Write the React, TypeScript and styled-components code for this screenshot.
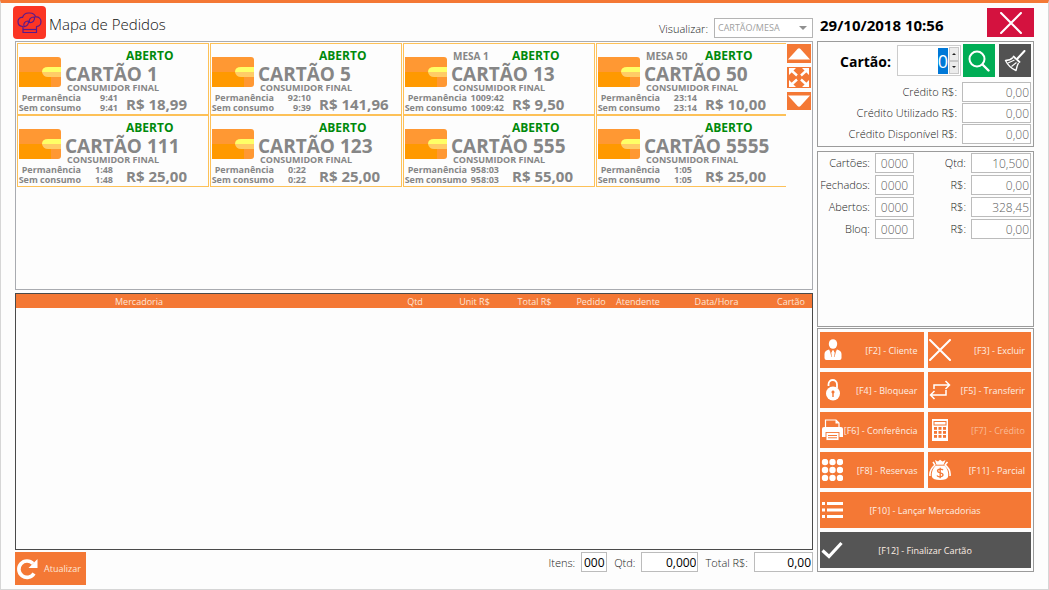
import React, { useEffect, useRef } from "react";
import styled, { createGlobalStyle } from "styled-components";

const ORANGE = "#f47835";
const AMBER = "#fdc158";

const GlobalStyle = createGlobalStyle`
  * { box-sizing: border-box; }
  body { margin: 0; background: #fdfdfd; font-family: "Open Sans", "Noto Sans", sans-serif; }
  button, input, select { font-family: inherit; margin: 0; }
  svg { display: block; }
`;

const Window = styled.div`
  display: flex;
  flex-direction: column;
  min-height: 100vh;
  padding: 0 14px;
  border: 1px solid #d6d6d6;
  border-top: 3px solid ${ORANGE};
`;

const Split = styled.div`
  display: grid;
  grid-template-columns: minmax(0, 1fr) 217px;
  column-gap: 4px;
`;

const Header = styled(Split).attrs({ as: "header" })`
  height: 38px;
`;

const Content = styled(Split).attrs({ as: "main" })`
  flex: 1;
`;

const TitleBar = styled.div`
  display: flex;
  align-items: center;
  margin-left: -2px;
`;

const Title = styled.h1`
  flex: 1;
  margin: 0 0 0 3px;
  padding-top: 4px;
  font-size: 15px;
  font-weight: 300;
  line-height: 24px;
  color: #111;
`;

const ViewLabel = styled.label`
  padding: 13px 6px 0 0;
  font-size: 11px;
  font-weight: 300;
  line-height: 16px;
  color: #222;
`;

const SelectBox = styled.div`
  position: relative;
  width: 99px;
  margin-top: 11px;
  svg { position: absolute; right: 6px; top: 8px; }
`;

const ViewSelect = styled.select`
  display: block;
  width: 100%;
  height: 20px;
  padding: 0 3px;
  border: 1px solid #b4b4b4;
  border-radius: 0;
  background: #fff;
  appearance: none;
  font-size: 9px;
  color: #a0a0a0;
  opacity: 1;
`;

const ClockBar = styled.div`
  display: flex;
  justify-content: space-between;
  align-items: flex-start;
  padding: 5px 0 0 3px;
`;

const Clock = styled.time`
  padding-top: 5px;
  font-size: 15px;
  font-weight: 700;
  line-height: 24px;
  color: #000;
`;

const IconButton = styled.button<{ $bg: string; $w: number; $h: number }>`
  display: flex;
  align-items: center;
  justify-content: center;
  flex: none;
  width: ${(p) => p.$w}px;
  height: ${(p) => p.$h}px;
  padding: 0;
  border: 0;
  background: ${(p) => p.$bg};
`;

const Column = styled.div`
  display: flex;
  flex-direction: column;
  min-width: 0;
`;

const SideColumn = styled(Column)`
  padding-bottom: 17px;
`;

const CardsPanel = styled.section`
  display: grid;
  grid-template-columns: minmax(0, 1fr) 24px;
  column-gap: 1px;
  min-height: 249px;
  padding: 1px;
  border: 1px solid #a9abb0;
`;

const CardGrid = styled.div`
  display: grid;
  grid-template-columns: repeat(4, 192px);
  grid-auto-rows: 72px;
  column-gap: 1px;
  align-content: start;
  overflow: hidden;
`;

const Scroller = styled.div`
  display: flex;
  flex-direction: column;
  gap: 4px;
  padding-top: 1px;
`;

const CardBox = styled.article`
  border: 1px solid ${AMBER};
  font-weight: 700;
  color: #868686;
`;

const CardTop = styled.div`
  display: grid;
  grid-template-columns: 42px 1fr;
  column-gap: 4px;
  height: 49px;
  padding-left: 1px;
  svg { margin-top: 13px; }
`;

const StatusRow = styled.div`
  display: grid;
  grid-template-columns: 61px 1fr;
  padding-top: 4px;
  line-height: 16px;
`;

const Mesa = styled.span`
  padding-left: 2px;
  font-size: 10px;
`;

const Status = styled.span`
  font-size: 12px;
  color: #008a0c;
`;

const CardName = styled.h2`
  margin: 0;
  font-size: 19px;
  line-height: 20px;
  white-space: nowrap;
`;

const Client = styled.p`
  margin: 0;
  padding-left: 2px;
  font-size: 9px;
  line-height: 8px;
`;

const CardBottom = styled.div`
  display: grid;
  grid-template-columns: 63px 37px 1fr;
  font-size: 9px;
  line-height: 10px;
  white-space: nowrap;
`;

const Times = styled.div<{ $inset?: number }>`
  display: flex;
  flex-direction: column;
  align-items: flex-end;
  padding-right: ${(p) => p.$inset || 0}px;
`;

const Price = styled.strong`
  padding-left: 8px;
  font-size: 15px;
  font-weight: 700;
  line-height: 23px;
`;

const TablePanel = styled.section`
  flex: 1;
  margin-top: 3px;
  min-height: 120px;
  border: 1px solid #4a4a4a;
`;

const ItemsTable = styled.table`
  width: 100%;
  border-collapse: collapse;
  table-layout: fixed;
`;

const Th = styled.th<{ $w?: number; $first?: boolean }>`
  width: ${(p) => (p.$w ? `${p.$w}px` : "auto")};
  height: 14px;
  padding: 1px 0 0 ${(p) => (p.$first ? 99 : 0)}px;
  background: ${ORANGE};
  color: #fde6d8;
  font-size: 9px;
  font-weight: 400;
  line-height: 13px;
  text-align: ${(p) => (p.$first ? "left" : "center")};
  white-space: nowrap;
`;

const Footer = styled.footer`
  display: flex;
  align-items: flex-start;
  padding: 2px 0 4px;
`;

const RefreshButton = styled.button`
  display: flex;
  align-items: center;
  width: 71px;
  height: 33px;
  margin-right: auto;
  padding: 0 0 0 1px;
  gap: 6px;
  border: 0;
  background: ${ORANGE};
  color: #fde6d8;
  font-size: 9px;
`;

const FooterLabel = styled.label`
  padding: 0 6px 0 7px;
  font-size: 11px;
  font-weight: 300;
  line-height: 21px;
  color: #222;
`;

const Field = styled.input<{ $w: number; $dark?: boolean }>`
  width: ${(p) => p.$w}px;
  height: 20px;
  padding: 0 1px;
  border: 1px solid #bcbcbc;
  border-radius: 0;
  background: #fff;
  color: ${(p) => (p.$dark ? "#000" : "#606060")};
  font-size: 12px;
  font-weight: ${(p) => (p.$dark ? 400 : 300)};
  text-align: right;
  outline: none;
`;

const CountField = styled(Field)`
  text-align: center;
`;

const SidePanel = styled.section<{ $grow?: boolean; $gap: number }>`
  flex: ${(p) => (p.$grow ? "1 0 auto" : "none")};
  margin-bottom: ${(p) => p.$gap}px;
  padding: ${(p) => (p.$grow ? 1 : 2)}px 2px 2px;
  border: 1px solid #9b9b9b;
`;

const SearchRow = styled.div`
  display: flex;
  justify-content: flex-end;
  align-items: center;
  height: 33px;
  margin-bottom: 5px;
`;

const CardLabel = styled.label`
  padding: 2px 6px 0 0;
  font-size: 14px;
  font-weight: 700;
  color: #000;
`;

const Spinner = styled.div`
  display: flex;
  width: 64px;
  height: 31px;
  margin-right: 2px;
  padding: 1px;
  border: 1px solid #ccc;
  background: #fff;
`;

const SearchButtons = styled.div`
  display: flex;
  gap: 4px;
`;

const SpinnerInput = styled.input`
  flex: 1;
  min-width: 0;
  padding: 0;
  border: 0;
  outline: none;
  background: transparent;
  font-size: 18px;
  font-weight: 400;
  line-height: 26px;
  text-align: right;
  &::selection { background: #0078d7; color: #fff; }
`;

const Arrows = styled.div`
  display: grid;
  grid-template-rows: 1fr 1fr;
  width: 10px;
  margin-left: 1px;
`;

const ArrowButton = styled.button`
  display: flex;
  align-items: center;
  justify-content: center;
  padding: 0;
  border: 1px solid #c8c8c8;
  background: #ececec;
`;

const CreditGrid = styled.div`
  display: grid;
  grid-template-columns: 1fr auto;
  row-gap: 1px;
  column-gap: 5px;
`;

const TotalsGrid = styled.div`
  display: grid;
  grid-template-columns: 50px 39px 1fr auto;
  column-gap: 5px;
  row-gap: 2px;
`;

const FieldLabel = styled.label`
  font-size: 11px;
  font-weight: 300;
  line-height: 20px;
  text-align: right;
  white-space: nowrap;
  color: #222;
`;

const Actions = styled.div`
  display: grid;
  grid-template-columns: 1fr 1fr;
  gap: 4px;
  padding: 1px 0;
`;

const ActionButton = styled.button<{ $wide?: boolean; $dark?: boolean }>`
  display: grid;
  grid-template-columns: 22px 1fr;
  align-items: center;
  grid-column: ${(p) => (p.$wide ? "1 / -1" : "auto")};
  height: 36px;
  padding: 0 ${(p) => (p.$wide ? 24 : 6)}px 0 1px;
  border: 0;
  background: ${(p) => (p.$dark ? "#555" : ORANGE)};
  color: #fdeee4;
  font-size: 9px;
  text-align: ${(p) => (p.$wide ? "center" : "right")};
  white-space: nowrap;
  &:disabled { color: #f9bb97; }
`;

const Logo = () => (
  <svg width="33" height="33" viewBox="0 0 33 33">
    <rect width="33" height="33" rx="4" fill="#fb3524" />
    <g fill="none" stroke="#5a1a8c" strokeWidth="1.2" strokeLinejoin="round">
      <path d="M10 26.500V20.500C6.500 20.500 5 18 5 15.500C5 13 7 11 9.500 11.500C10.500 8.500 13 6.800 16 7C19.500 6.800 22 8.500 22.500 11C26 10.500 28 13 28 15.500C28 18.500 26 20.500 23.500 20.500V26.500Z" />
      <path d="M10 23.500H23.500" />
      <path d="M11 20.500C10 17.500 12 14.800 15.500 15C16 18 14 20.800 11 20.500ZM16.500 16.500C15.500 13.500 17.500 10.800 21.500 11C22 14 20 17 16.500 16.500Z" />
    </g>
  </svg>
);

const Wallet = () => (
  <svg width="42" height="30" viewBox="0 0 42 30">
    <path d="M0 0H39Q42 0 42 3V27Q42 30 39 30H0Z" fill="#ff9833" />
    <path d="M0 15H32V30H0Z" fill="#ff9900" />
    <path d="M42 10H29Q23 10 23 15H42Z" fill="#ffff66" />
    <path d="M23 15H42V20H29Q24 20 23 15Z" fill="#ffcc66" />
  </svg>
);

const Cross = ({ size }: { size: number }) => (
  <svg width={size} height={size} viewBox="0 0 21 21">
    <path d="M1 1L20 20M20 1L1 20" stroke="#fff" strokeWidth="2" strokeLinecap="round" />
  </svg>
);

const SearchIcon = () => (
  <svg width="22" height="22" viewBox="0 0 22 22" fill="none" stroke="#fff">
    <circle cx="9" cy="9" r="7.500" strokeWidth="2" />
    <path d="M14.500 14.500L20.500 20.500" strokeWidth="2.400" strokeLinecap="round" />
  </svg>
);

const Broom = () => (
  <svg width="22" height="22" viewBox="0 0 22 22" fill="none" stroke="#fff">
    <path d="M20.500 1L13.500 8.500" strokeWidth="2" strokeLinecap="round" />
    <path d="M9.500 6.500L15.500 12" strokeWidth="1.800" strokeLinecap="round" />
    <path d="M9 7.500C7 9.500 4 10.500 1.500 10.500C3.500 14.500 7 18.500 12 20.500C12.500 18 13 15.500 14.500 13" strokeWidth="1.400" strokeLinejoin="round" />
    <path d="M4 13L10.500 10M7.500 16.500L12.500 12.500" strokeWidth="1.100" />
  </svg>
);

const Triangle = ({ down }: { down?: boolean }) => (
  <svg width="22" height="12" viewBox="0 0 22 12">
    <path d={down ? "M0 0.500H22L12.500 11Q11 12.500 9.500 11Z" : "M0 11.500H22L12.500 1Q11 -0.500 9.500 1Z"} fill="#fff" />
  </svg>
);

const Expand = () => (
  <svg width="22" height="21" viewBox="0 0 22 21">
    <path
      d="M1 1H8L1 8ZM21 1H14L21 8ZM1 20H8L1 13ZM21 20H14L21 13Z"
      fill="#fff"
    />
    <path
      d="M3 3L9 8.500M19 3L13 8.500M3 18L9 12.500M19 18L13 12.500"
      stroke="#fff"
      strokeWidth="2.400"
    />
  </svg>
);

const Caret = ({ w, down }: { w: number; down?: boolean }) => (
  <svg width={w} height={w / 2} viewBox="0 0 8 4">
    <path d={down ? "M0 0H8L4 4Z" : "M0 4H8L4 0Z"} fill={w > 5 ? "#909090" : "#222"} />
  </svg>
);

const Refresh = () => (
  <svg width="22" height="22" viewBox="0 0 22 22">
    <path d="M17 5.500A8.200 8.200 0 1 0 18 15.500" fill="none" stroke="#fff" strokeWidth="3.600" />
    <path d="M21.500 1V10H12.500Z" fill="#fff" />
  </svg>
);

const icons = {
  client: (
    <g fill="#fff">
      <ellipse cx="12" cy="5" rx="4.200" ry="4.800" />
      <path d="M8 10.500L12 15L16 10.500Q20.500 11.500 20.500 15V19Q20.500 21 18.500 21H5.500Q3.500 21 3.500 19V15Q3.500 11.500 8 10.500Z" />
      <path d="M9 11L11 18M15 11L13 18" stroke={ORANGE} strokeWidth="0.900" />
      <path d="M11 11.500H13L13.300 17L12 19L10.700 17Z" />
    </g>
  ),
  cross: <path d="M1 1L21 21M21 1L1 21" stroke="#fff" strokeWidth="2" strokeLinecap="round" />,
  lock: (
    <g>
      <path d="M7.500 7V5.500C7.500 -0.500 16 -0.500 16 5.500V9" fill="none" stroke="#fff" strokeWidth="1.800" />
      <circle cx="12" cy="14.500" r="7" fill="#fff" />
      <path d="M12 11.500A1.600 1.600 0 0 1 12.700 14.500V18H11.300V14.500A1.600 1.600 0 0 1 12 11.500Z" fill={ORANGE} />
    </g>
  ),
  swap: (
    <g fill="none" stroke="#fff" strokeWidth="1.500">
      <path d="M5 10V6H20.500M16.500 2L20.500 6L16.500 10M17 11V16H1.500M5.500 12L1.500 16L5.500 20" />
    </g>
  ),
  printer: (
    <g fill="#fff">
      <path d="M4.500 1H15L18 4V10H4.500Z" fill="none" stroke="#fff" strokeWidth="1.200" />
      <path d="M14.500 1V4.500H18Z" />
      <path d="M3 8H20Q22 8 22 10V18H1V10Q1 8 3 8Z" />
      <rect x="5" y="13.500" width="13" height="8" stroke={ORANGE} strokeWidth="0.900" />
      <path d="M7 16.500H16M7 18.800H16" stroke={ORANGE} strokeWidth="1" />
    </g>
  ),
  calc: (
    <g>
      <path d="M3 0H19V22H3Z" fill="#fff" />
      <rect x="5" y="2.500" width="12" height="3.500" fill="none" stroke={ORANGE} strokeWidth="1" />
      <g fill={ORANGE}>
        {[8, 12, 16].map((y) => [5, 9.5, 14].map((x) => <rect key={`${x}-${y}`} x={x} y={y} width="3" height="2.800" />))}
      </g>
    </g>
  ),
  grid: (
    <g fill="#fff">
      {[3, 11, 19].map((y) => [4, 11.5, 19].map((x) => <circle key={`${x}-${y}`} cx={x} cy={y} r="3.200" />))}
    </g>
  ),
  money: (
    <g>
      <path d="M6 1L9 2.500L11 0.800L13.500 2.500L16.500 1L14.500 6C18 8.500 20 13 19 18Q18 21 11 21Q4 21 3 18C2 13 4.500 8.500 7.500 6Z" fill="#fff" />
      <path d="M4 3L6 6C2.500 9 0.500 13 1 17M18.500 3L16 6C20 9 21.500 13 21 17" fill="none" stroke="#fff" strokeWidth="1.600" />
      <path d="M6.500 6.200H15.500" stroke={ORANGE} strokeWidth="0.900" />
      <path d="M14 11.200C13 9.800 8.500 9.800 8.500 12C8.500 14.500 14 13 14 15.800C14 18.300 9 18.300 8 16.500M11.200 8.800V19.200" fill="none" stroke={ORANGE} strokeWidth="1.300" />
    </g>
  ),
  list: (
    <g fill="#fff">
      {[3, 9.5, 16].map((y) => (
        <path key={y} d={`M1 ${y}h3v3h-3zM6 ${y}h16v3h-16z`} />
      ))}
    </g>
  ),
  check: <path d="M1.500 11.500L8 17.500L20.500 4" fill="none" stroke="#fff" strokeWidth="3.200" />,
};

type Action = { label: string; icon: keyof typeof icons; disabled?: boolean; wide?: boolean; dark?: boolean };

const actions: Action[] = [
  { label: "[F2] - Cliente", icon: "client" },
  { label: "[F3] - Excluir", icon: "cross" },
  { label: "[F4] - Bloquear", icon: "lock" },
  { label: "[F5] - Transferir", icon: "swap" },
  { label: "[F6] - Conferência", icon: "printer" },
  { label: "[F7] - Crédito", icon: "calc", disabled: true },
  { label: "[F8] - Reservas", icon: "grid" },
  { label: "[F11] - Parcial", icon: "money" },
  { label: "[F10] - Lançar Mercadorias", icon: "list", wide: true },
  { label: "[F12] - Finalizar Cartão", icon: "check", wide: true, dark: true },
];

type Card = { n: string; mesa?: string; stay: string; idle: string; price: string; inset?: number };

const cards: Card[] = [
  { n: "1", stay: "9:41", idle: "9:41", price: "18,99" },
  { n: "5", stay: "92:10", idle: "9:39", price: "141,96" },
  { n: "13", mesa: "MESA 1", stay: "1009:42", idle: "1009:42", price: "9,50" },
  { n: "50", mesa: "MESA 50", stay: "23:14", idle: "23:14", price: "10,00" },
  { n: "111", stay: "1:48", idle: "1:48", price: "25,00", inset: 5 },
  { n: "123", stay: "0:22", idle: "0:22", price: "25,00", inset: 5 },
  { n: "555", stay: "958:03", idle: "958:03", price: "55,00", inset: 5 },
  { n: "5555", stay: "1:05", idle: "1:05", price: "25,00", inset: 5 },
];

const credits = [
  ["Crédito R$:", "0,00"],
  ["Crédito Utilizado R$:", "0,00"],
  ["Crédito Disponível R$:", "0,00"],
];

const totals = [
  ["Cartões:", "0000", "Qtd:", "10,500"],
  ["Fechados:", "0000", "R$:", "0,00"],
  ["Abertos:", "0000", "R$:", "328,45"],
  ["Bloq:", "0000", "R$:", "0,00"],
];

const columns: [string, number][] = [
  ["Qtd", 68],
  ["Unit R$", 51],
  ["Total R$", 69],
  ["Pedido", 44],
  ["Atendente", 50],
  ["Data/Hora", 107],
  ["Cartão", 42],
];

function OrderCard({ card }: { card: Card }) {
  return (
    <CardBox>
      <CardTop>
        <Wallet />
        <div>
          <StatusRow>
            <Mesa>{card.mesa}</Mesa>
            <Status>ABERTO</Status>
          </StatusRow>
          <CardName>CARTÃO {card.n}</CardName>
          <Client>CONSUMIDOR FINAL</Client>
        </div>
      </CardTop>
      <CardBottom>
        <Times>
          <span>Permanência</span>
          <span>Sem consumo</span>
        </Times>
        <Times $inset={card.inset}>
          <span>{card.stay}</span>
          <span>{card.idle}</span>
        </Times>
        <Price>R$ {card.price}</Price>
      </CardBottom>
    </CardBox>
  );
}

export default function App() {
  const cardInput = useRef<HTMLInputElement>(null);

  useEffect(() => {
    cardInput.current?.focus();
    cardInput.current?.select();
  }, []);

  return (
    <>
      <GlobalStyle />
      <Window>
        <Header>
          <TitleBar>
            <Logo />
            <Title>Mapa de Pedidos</Title>
            <ViewLabel htmlFor="view">Visualizar:</ViewLabel>
            <SelectBox>
              <ViewSelect id="view" disabled>
                <option>CARTÃO/MESA</option>
              </ViewSelect>
              <Caret w={8} down />
            </SelectBox>
          </TitleBar>
          <ClockBar>
            <Clock>29/10/2018 10:56</Clock>
            <IconButton $bg="#d4123f" $w={47} $h={29} aria-label="Fechar">
              <Cross size={22} />
            </IconButton>
          </ClockBar>
        </Header>

        <Content>
          <Column>
            <CardsPanel>
              <CardGrid>
                {cards.map((c) => (
                  <OrderCard key={c.n} card={c} />
                ))}
              </CardGrid>
              <Scroller>
                <IconButton $bg={ORANGE} $w={24} $h={19} aria-label="Subir">
                  <Triangle />
                </IconButton>
                <IconButton $bg={ORANGE} $w={24} $h={21} aria-label="Expandir">
                  <Expand />
                </IconButton>
                <IconButton $bg={ORANGE} $w={24} $h={18} aria-label="Descer">
                  <Triangle down />
                </IconButton>
              </Scroller>
            </CardsPanel>

            <TablePanel>
              <ItemsTable>
                <thead>
                  <tr>
                    <Th $first>Mercadoria</Th>
                    {columns.map(([name, w]) => (
                      <Th key={name} $w={w}>
                        {name}
                      </Th>
                    ))}
                  </tr>
                </thead>
              </ItemsTable>
            </TablePanel>

            <Footer>
              <RefreshButton>
                <Refresh />
                Atualizar
              </RefreshButton>
              <FooterLabel htmlFor="items">Itens:</FooterLabel>
              <CountField id="items" $w={26} $dark readOnly value="000" />
              <FooterLabel htmlFor="qty">Qtd:</FooterLabel>
              <Field id="qty" $w={57} $dark readOnly value="0,000" />
              <FooterLabel htmlFor="total">Total R$:</FooterLabel>
              <Field id="total" $w={59} $dark readOnly value="0,00" />
            </Footer>
          </Column>

          <SideColumn>
            <SidePanel $gap={4}>
              <SearchRow>
                <CardLabel htmlFor="card">Cartão:</CardLabel>
                <Spinner>
                  <SpinnerInput id="card" ref={cardInput} defaultValue="0" />
                  <Arrows>
                    <ArrowButton aria-label="Aumentar">
                      <Caret w={4} />
                    </ArrowButton>
                    <ArrowButton aria-label="Diminuir">
                      <Caret w={4} down />
                    </ArrowButton>
                  </Arrows>
                </Spinner>
                <SearchButtons>
                  <IconButton $bg="#00ad55" $w={32} $h={33} aria-label="Pesquisar">
                    <SearchIcon />
                  </IconButton>
                  <IconButton $bg="#525252" $w={32} $h={33} aria-label="Limpar">
                    <Broom />
                  </IconButton>
                </SearchButtons>
              </SearchRow>
              <CreditGrid>
                {credits.map(([label, value], i) => (
                  <React.Fragment key={label}>
                    <FieldLabel htmlFor={`credit${i}`}>{label}</FieldLabel>
                    <Field id={`credit${i}`} $w={69} readOnly value={value} />
                  </React.Fragment>
                ))}
              </CreditGrid>
            </SidePanel>

            <SidePanel $gap={1} $grow>
              <TotalsGrid>
                {totals.map(([l1, v1, l2, v2], i) => (
                  <React.Fragment key={l1}>
                    <FieldLabel htmlFor={`count${i}`}>{l1}</FieldLabel>
                    <CountField id={`count${i}`} $w={39} readOnly value={v1} />
                    <FieldLabel htmlFor={`sum${i}`}>{l2}</FieldLabel>
                    <Field id={`sum${i}`} $w={60} readOnly value={v2} />
                  </React.Fragment>
                ))}
              </TotalsGrid>
            </SidePanel>

            <SidePanel $gap={0}>
              <Actions>
                {actions.map((a) => (
                  <ActionButton key={a.label} $wide={a.wide} $dark={a.dark} disabled={a.disabled}>
                    <svg width="22" height="22" viewBox="0 0 22 22">
                      {icons[a.icon]}
                    </svg>
                    <span>{a.label}</span>
                  </ActionButton>
                ))}
              </Actions>
            </SidePanel>
          </SideColumn>
        </Content>
      </Window>
    </>
  );
}
